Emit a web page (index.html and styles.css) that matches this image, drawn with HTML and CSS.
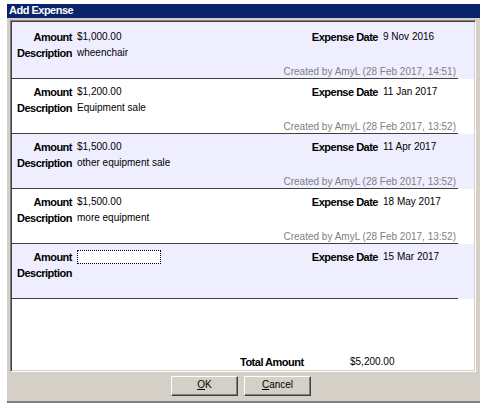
FILE: index.html
```html
<!DOCTYPE html>
<html lang="en">

<head>
    <meta charset="UTF-8">
    <meta name="viewport" content="width=device-width, initial-scale=1.0">
    <title>Add Expense</title>
    <link rel="stylesheet" href="styles.css">
</head>

<body>
    <div class="window">
        <div class="titlebar">Add Expense</div>
        <div class="panel">
            <div class="list">
                <div class="row alt first">
                    <div class="body">
                        <div class="line">
                            <span class="label">Amount</span><span class="value">$1,000.00</span>
                            <span class="label">Expense Date</span><span class="value">9 Nov 2016</span>
                        </div>
                        <div class="line">
                            <span class="label">Description</span><span class="value">wheenchair</span>
                        </div>
                        <div class="created">Created by AmyL (28 Feb 2017, 14:51)</div>
                    </div>
                </div>
                <div class="row">
                    <div class="body">
                        <div class="line">
                            <span class="label">Amount</span><span class="value">$1,200.00</span>
                            <span class="label">Expense Date</span><span class="value">11 Jan 2017</span>
                        </div>
                        <div class="line">
                            <span class="label">Description</span><span class="value">Equipment sale</span>
                        </div>
                        <div class="created">Created by AmyL (28 Feb 2017, 13:52)</div>
                    </div>
                </div>
                <div class="row alt">
                    <div class="body">
                        <div class="line">
                            <span class="label">Amount</span><span class="value">$1,500.00</span>
                            <span class="label">Expense Date</span><span class="value">11 Apr 2017</span>
                        </div>
                        <div class="line">
                            <span class="label">Description</span><span class="value">other equipment sale</span>
                        </div>
                        <div class="created">Created by AmyL (28 Feb 2017, 13:52)</div>
                    </div>
                </div>
                <div class="row">
                    <div class="body">
                        <div class="line">
                            <span class="label">Amount</span><span class="value">$1,500.00</span>
                            <span class="label">Expense Date</span><span class="value">18 May 2017</span>
                        </div>
                        <div class="line">
                            <span class="label">Description</span><span class="value">more equipment</span>
                        </div>
                        <div class="created">Created by AmyL (28 Feb 2017, 13:52)</div>
                    </div>
                </div>
                <div class="row alt">
                    <div class="body">
                        <div class="line">
                            <span class="label">Amount</span><span class="value"><span class="edit"></span></span>
                            <span class="label">Expense Date</span><span class="value">15 Mar 2017</span>
                        </div>
                        <div class="line">
                            <span class="label">Description</span><span class="value"></span>
                        </div>
                    </div>
                </div>
            </div>
            <div class="total">
                <span class="label">Total Amount</span><span class="value">$5,200.00</span>
            </div>
        </div>
        <div class="buttons">
            <div class="btn"><u>O</u>K</div>
            <div class="btn"><u>C</u>ancel</div>
        </div>
    </div>
</body>

</html>
```

FILE: styles.css
```css
* {
    margin: 0;
    padding: 0;
    box-sizing: border-box;
}

body {
    background: #fff;
    font-family: "Liberation Sans", Arial, sans-serif;
    font-size: 10px;
    color: #000;
}

.window {
    margin: 4px 0 0 7px;
    width: 473px;
    height: 399px;
    background: #d4d0c8;
    border-bottom: 2px solid #808080;
    display: flex;
    flex-direction: column;
}

.titlebar {
    height: 14px;
    background: #0a246a;
    color: #fff;
    font-weight: bold;
    font-size: 11px;
    letter-spacing: -0.5px;
    line-height: 13px;
    padding-left: 2px;
}

.panel {
    margin: 2px 4px 0 3px;
    height: 352px;
    background: #fff;
    border: 1px solid;
    border-color: #808080 #fff #fff #808080;
    box-shadow: inset 1px 1px #404040, inset -1px -1px #d4d0c8;
    padding: 1px;
    display: flex;
    flex-direction: column;
}

.row.alt {
    background: #eeeeff;
}

.body {
    height: 55px;
    margin-right: 16px;
    padding-top: 5px;
    border-bottom: 1px solid #404040;
    display: flex;
    flex-direction: column;
}

.first .body {
    height: 57px;
    padding-top: 7px;
}

.line {
    display: grid;
    grid-template-columns: 60px 216px 80px 1fr;
    column-gap: 5px;
    line-height: 16px;
    height: 16px;
}

.label {
    font-weight: bold;
    font-size: 11px;
    letter-spacing: -0.5px;
    text-align: right;
    white-space: nowrap;
}

.value {
    white-space: nowrap;
}

.edit {
    display: inline-block;
    width: 84px;
    height: 14px;
    margin-top: 1px;
    vertical-align: top;
    background: #fff;
    border: 1px dotted #000;
}

.created {
    margin-top: auto;
    line-height: 12px;
    text-align: right;
    padding-right: 2px;
    color: #808080;
}

.total {
    margin-top: auto;
    line-height: 16px;
    padding-left: 228px;
    display: flex;
}

.total .label {
    width: 110px;
    text-align: left;
}

.buttons {
    display: flex;
    justify-content: center;
    gap: 6px;
    padding-right: 5px;
    margin-top: 4px;
}

.btn {
    width: 67px;
    height: 20px;
    line-height: 16px;
    text-align: center;
    border: 1px solid;
    border-color: #fff #404040 #404040 #fff;
    box-shadow: inset -1px -1px #808080;
}
```
